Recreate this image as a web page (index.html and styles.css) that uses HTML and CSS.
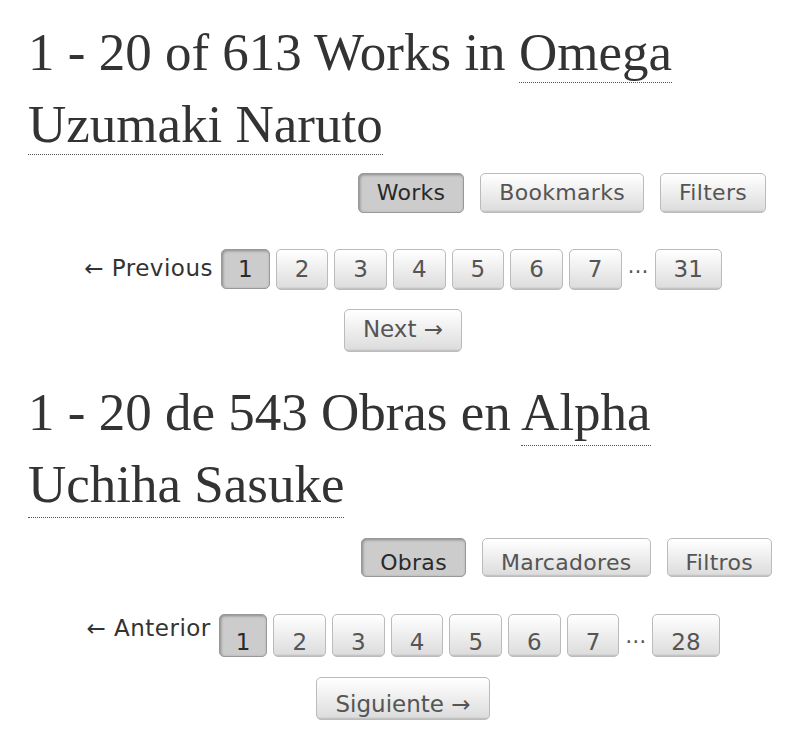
FILE: index.html
```html
<!DOCTYPE html>
<html lang="en">
<head>
    <meta charset="UTF-8">
    <meta name="viewport" content="width=device-width, initial-scale=1.0">
    <title>Works in Omega Uzumaki Naruto</title>
    <link rel="stylesheet" href="styles.css">
</head>
<body>

    <div class="region">
        <h2 class="heading">1 - 20 of 613 Works in <a class="tag" href="#">Omega Uzumaki Naruto</a></h2>
        <ul class="navigation">
            <li><span class="current">Works</span></li>
            <li><a href="#">Bookmarks</a></li>
            <li><a href="#">Filters</a></li>
        </ul>
        <ol class="pagination">
            <li class="previous">← Previous</li>
            <li><span class="current">1</span></li>
            <li><a href="#">2</a></li>
            <li><a href="#">3</a></li>
            <li><a href="#">4</a></li>
            <li><a href="#">5</a></li>
            <li><a href="#">6</a></li>
            <li><a href="#">7</a></li>
            <li class="gap">…</li>
            <li><a href="#">31</a></li>
            <li class="next"><a href="#">Next →</a></li>
        </ol>
    </div>

    <div class="region es" lang="es">
        <h2 class="heading">1 - 20 de 543 Obras en <a class="tag" href="#">Alpha Uchiha Sasuke</a></h2>
        <ul class="navigation">
            <li><span class="current">Obras</span></li>
            <li><a href="#">Marcadores</a></li>
            <li><a href="#">Filtros</a></li>
        </ul>
        <ol class="pagination">
            <li class="previous">← Anterior</li>
            <li><span class="current">1</span></li>
            <li><a href="#">2</a></li>
            <li><a href="#">3</a></li>
            <li><a href="#">4</a></li>
            <li><a href="#">5</a></li>
            <li><a href="#">6</a></li>
            <li><a href="#">7</a></li>
            <li class="gap">…</li>
            <li><a href="#">28</a></li>
            <li class="next"><a href="#">Siguiente →</a></li>
        </ol>
    </div>

</body>
</html>
```

FILE: styles.css
```css
body {
    margin: 0;
    font-family: 'DejaVu Sans', Verdana, sans-serif;
    color: #2a2a2a;
    background-color: #fff;
}

.region {
    padding: 0 12px 0 28px;
}

.heading {
    margin: 16px 0 0;
    font-family: 'Liberation Serif', Georgia, serif;
    font-weight: normal;
    font-size: 53px;
    line-height: 72px;
    color: #333;
}

.heading a {
    color: inherit;
    text-decoration: none;
    border-bottom: 1px dotted #555;
    padding-bottom: 1px;
}

/* buttons */

.navigation a,
.navigation span,
.pagination a,
.pagination span {
    display: block;
    border: 1px solid #bbb;
    border-radius: 5px;
    background-color: #eee;
    background-image: linear-gradient(#fff 2%, #ddd 95%, #bbb 100%);
    color: #555;
    text-decoration: none;
}

.navigation .current,
.pagination .current {
    background-color: #ccc;
    background-image: none;
    border-color: #999;
    color: #2a2a2a;
    box-shadow: inset 1px 1px 3px #888;
}

.navigation {
    list-style: none;
    margin: 13px 12px 0 0;
    padding: 0;
    display: flex;
    justify-content: flex-end;
    gap: 16px;
}

.navigation a,
.navigation span {
    font-size: 22px;
    line-height: 28px;
    letter-spacing: 0.3px;
    padding: 5px 18px;
}

/* pagination */

.pagination {
    list-style: none;
    margin: 36px 0 0;
    padding: 0;
    display: flex;
    flex-wrap: wrap;
    justify-content: center;
    align-items: flex-start;
    column-gap: 6px;
    row-gap: 19px;
    font-size: 23px;
    line-height: 28px;
}

.pagination a {
    padding: 5px 18px 6px;
}

.pagination .current {
    padding: 5px 16px;
}

.pagination .previous {
    padding-top: 5px;
    margin-right: 2px;
    letter-spacing: 0.5px;
    color: #333;
}

.pagination .gap {
    margin: 0;
    padding-top: 3px;
    font-size: 21px;
    color: #555;
}

.pagination .next a {
    padding: 5px 18px 8px;
}

/* spanish block */

.es .heading {
    margin-top: 24px;
}

.es .heading a {
    padding-bottom: 4px;
}

.es .navigation {
    margin-top: 18px;
    margin-right: 6px;
}

.es .navigation a,
.es .navigation span {
    line-height: 27px;
    padding: 10px 18px 0;
}

.es .pagination {
    margin-top: 37px;
    row-gap: 20px;
}

.es .pagination a {
    padding: 13px 18px 0;
}

.es .pagination .current {
    padding: 13px 16px 0;
}

.es .pagination .previous {
    padding-top: 0;
}

.es .pagination .gap {
    padding-top: 8px;
}

.es .pagination .next a {
    padding: 12px 18px 1px;
}
```
